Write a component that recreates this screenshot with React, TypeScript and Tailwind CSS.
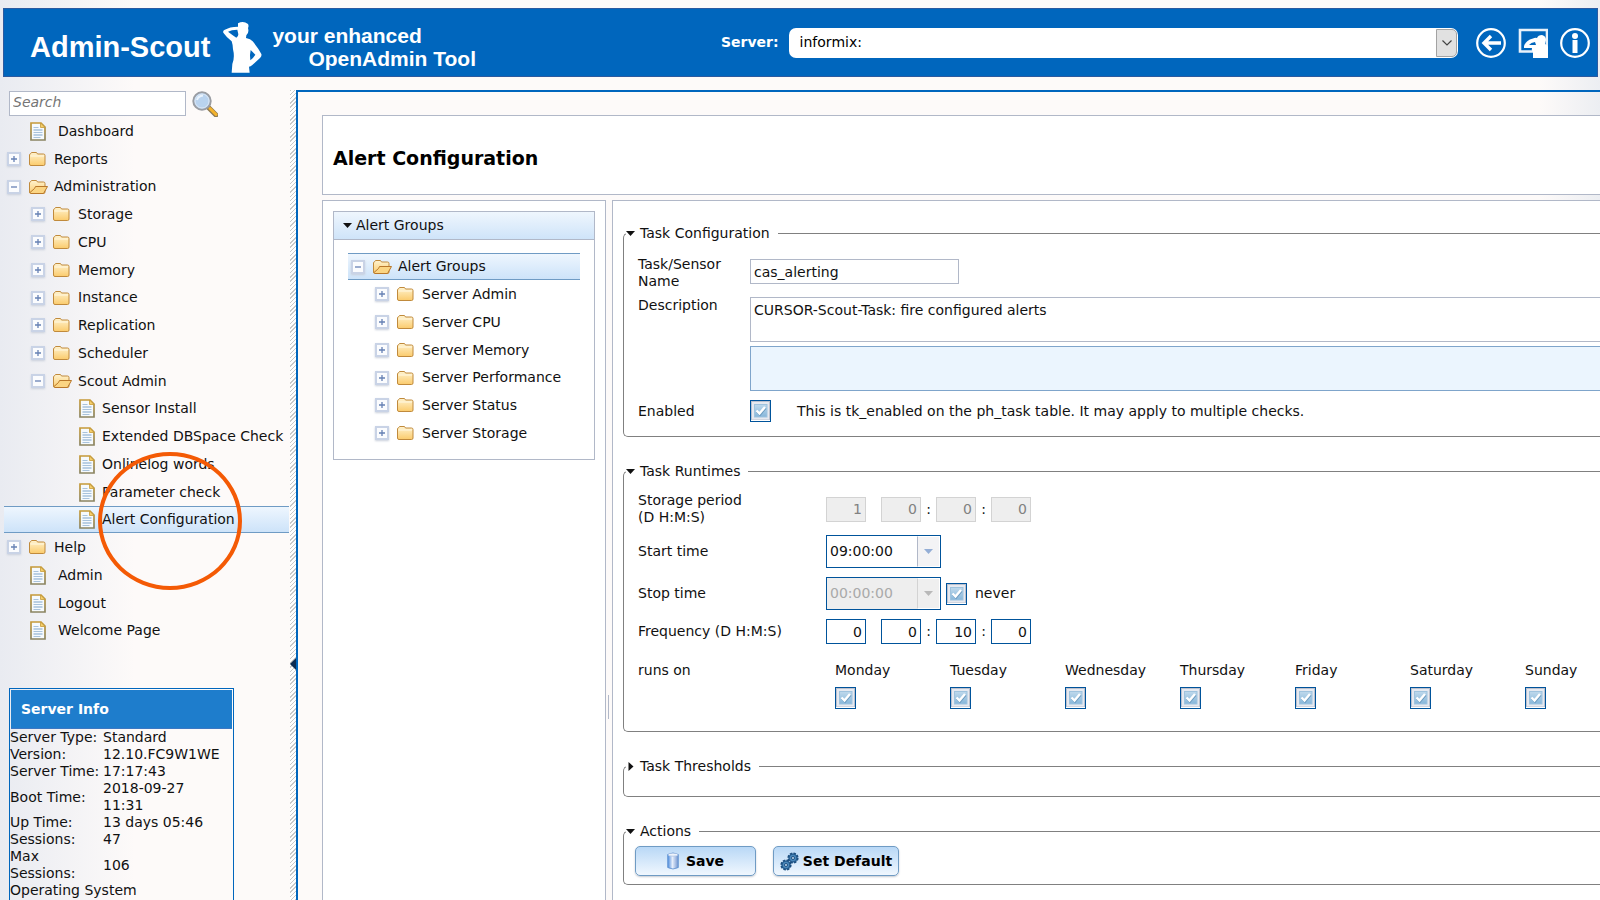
import { useState, type ReactNode } from "react";

type NodeKind = "leaf" | "folder" | "open";

interface TreeNode {
  label: string;
  kind: NodeKind;
  level: 0 | 1 | 2;
  selected?: boolean;
}

const MENU: TreeNode[] = [
  { label: "Dashboard", kind: "leaf", level: 0 },
  { label: "Reports", kind: "folder", level: 0 },
  { label: "Administration", kind: "open", level: 0 },
  { label: "Storage", kind: "folder", level: 1 },
  { label: "CPU", kind: "folder", level: 1 },
  { label: "Memory", kind: "folder", level: 1 },
  { label: "Instance", kind: "folder", level: 1 },
  { label: "Replication", kind: "folder", level: 1 },
  { label: "Scheduler", kind: "folder", level: 1 },
  { label: "Scout Admin", kind: "open", level: 1 },
  { label: "Sensor Install", kind: "leaf", level: 2 },
  { label: "Extended DBSpace Check", kind: "leaf", level: 2 },
  { label: "Onlinelog words", kind: "leaf", level: 2 },
  { label: "Parameter check", kind: "leaf", level: 2 },
  { label: "Alert Configuration", kind: "leaf", level: 2, selected: true },
  { label: "Help", kind: "folder", level: 0 },
  { label: "Admin", kind: "leaf", level: 0 },
  { label: "Logout", kind: "leaf", level: 0 },
  { label: "Welcome Page", kind: "leaf", level: 0 },
];

const ALERT_GROUPS: TreeNode[] = [
  { label: "Alert Groups", kind: "open", level: 0, selected: true },
  { label: "Server Admin", kind: "folder", level: 1 },
  { label: "Server CPU", kind: "folder", level: 1 },
  { label: "Server Memory", kind: "folder", level: 1 },
  { label: "Server Performance", kind: "folder", level: 1 },
  { label: "Server Status", kind: "folder", level: 1 },
  { label: "Server Storage", kind: "folder", level: 1 },
];

const SERVER_INFO = [
  ["Server Type:", "Standard"],
  ["Version:", "12.10.FC9W1WE"],
  ["Server Time:", "17:17:43"],
  ["Boot Time:", "2018-09-27 11:31"],
  ["Up Time:", "13 days 05:46"],
  ["Sessions:", "47"],
  ["Max Sessions:", "106"],
];

const DAYS = ["Monday", "Tuesday", "Wednesday", "Thursday", "Friday", "Saturday", "Sunday"];

function Defs() {
  return (
    <svg className="absolute h-0 w-0" aria-hidden="true">
      <defs>
        <linearGradient id="folder" x1="0" y1="0" x2="0" y2="1">
          <stop offset="0" stopColor="#fff3cf" />
          <stop offset="1" stopColor="#fbcb6c" />
        </linearGradient>
        <linearGradient id="page" x1="0" y1="0" x2="0" y2="1">
          <stop offset="0" stopColor="#c69a38" />
          <stop offset="1" stopColor="#8a8462" />
        </linearGradient>
        <linearGradient id="drum" x1="0" y1="0" x2="1" y2="0">
          <stop offset="0" stopColor="#4c8bdc" />
          <stop offset="0.45" stopColor="#e6eefb" />
          <stop offset="1" stopColor="#6f93cf" />
        </linearGradient>
        <linearGradient id="tick" x1="0" y1="0" x2="0" y2="1">
          <stop offset="0" stopColor="#bfd9ec" />
          <stop offset="1" stopColor="#86b6da" />
        </linearGradient>
      </defs>
    </svg>
  );
}

function PageIcon() {
  return (
    <svg className="h-[19px] w-4 shrink-0" viewBox="0 0 16 19">
      <path d="M1 1h10l4 4v13H1z" fill="#f6fafd" stroke="url(#page)" strokeWidth="1.700" />
      <path d="M10.500 1v4.500H15z" fill="#f6cf6a" stroke="#c69a38" strokeWidth=".8" />
      <path d="M3.500 5.500h5M3.500 10.500h9M3.500 15.500h7" stroke="#a9c3dc" />
      <path d="M3.500 8h9M3.500 13h9" stroke="#7fa5cb" />
    </svg>
  );
}

function FolderIcon({ open }: { open: boolean }) {
  return (
    <svg className="h-4 w-[19px] shrink-0" viewBox="0 0 19 16">
      <path
        d="M.5 4q0-1 1-1.200L2.500 1.500h5l1 1.500H14.500q1.500 0 1.500 1.500V13q0 1.500-1.500 1.500H2q-1.500 0-1.500-1.500z"
        fill="url(#folder)"
        stroke="#c08a3c"
      />
      {open ? (
        <path d="M1 13.500L5.500 9.500l1-2h12L14.500 14.500H2z" fill="#fbd583" stroke="#b9782b" />
      ) : (
        <path d="M1.500 5h13.500" stroke="#fff8e2" />
      )}
    </svg>
  );
}

function Expander({ open, label }: { open: boolean; label: string }) {
  return (
    <button
      aria-label={`${open ? "Collapse" : "Expand"} ${label}`}
      className="h-[14px] w-[14px] shrink-0 border-2 border-[#c9d3e6] bg-[#fbfcfe] shadow-[0_1px_2px_#c9cfdb]"
    >
      <svg viewBox="0 0 10 10" className="block h-[10px] w-[10px]">
        <path d={open ? "M2 5h6" : "M2 5h6M5 2v6"} stroke="#6681b4" strokeWidth="1.300" />
      </svg>
    </button>
  );
}

function TreeRow({ node }: { node: TreeNode }) {
  const leaf = node.kind === "leaf";
  const leafIndent = node.level === 0 ? "pl-[26px]" : "pl-[75px]";
  const folderIndent = node.level === 0 ? "pl-[3px]" : "pl-[27px]";
  const leafGap = node.level === 0 ? "gap-3" : "gap-[7px]";
  const look = node.selected
    ? "border-y border-[#6f9bc4] bg-linear-to-b from-[#eef6fe] to-[#cde3f9]"
    : "";

  return (
    <li className={`flex h-7 items-center ${leaf ? leafIndent : folderIndent} ${look}`}>
      {!leaf && <Expander open={node.kind === "open"} label={node.label} />}
      <a href="#" className={`flex items-center whitespace-nowrap ${leaf ? leafGap : "ml-2 gap-[6px]"}`}>
        {leaf ? <PageIcon /> : <FolderIcon open={node.kind === "open"} />}
        {node.label}
      </a>
    </li>
  );
}

function Triangle({ open = true }: { open?: boolean }) {
  return (
    <svg className="h-[9px] w-[9px] shrink-0" viewBox="0 0 9 9">
      <path d={open ? "M0 2h9L4.500 7z" : "M2.500 0v9l5-4.500z"} fill="#111" />
    </svg>
  );
}

function Tick({ id, label }: { id?: string; label?: string }) {
  const [on, setOn] = useState(true);
  return (
    <span className="relative block h-[22px] w-[21px] shrink-0">
      <input
        type="checkbox"
        id={id}
        aria-label={label}
        checked={on}
        onChange={() => setOn(!on)}
        className="block h-[22px] w-[21px] appearance-none border border-[#00539b] bg-[#dfe2ea]"
      />
      {on && (
        <svg className="pointer-events-none absolute inset-0 h-[22px] w-[21px]" viewBox="0 0 21 22">
          <rect x="1.500" y="1.500" width="18" height="18.500" fill="#e6e9f0" stroke="#bcc1ce" />
          <path d="M1 20.500h19" stroke="#fff" />
          <rect x="4.500" y="4.500" width="12.500" height="12.500" fill="url(#tick)" stroke="#9fc3de" />
          <path d="M7 11.500l3 3L15.500 8" fill="none" stroke="#6d9cc0" strokeWidth="2.400" />
          <path d="M6.500 10.500l3 3L15 7" fill="none" stroke="#fff" strokeWidth="2.400" />
        </svg>
      )}
    </span>
  );
}

function Section({ title, open = true, children }: { title: string; open?: boolean; children?: ReactNode }) {
  return (
    <fieldset className="rounded-l-[5px] border border-r-0 border-[#808080]">
      <legend className="ml-[2px] flex h-4 items-center gap-[5px] pr-2 leading-4">
        <Triangle open={open} />
        {title}
      </legend>
      {children}
    </fieldset>
  );
}

function Duration({ name, values, disabled = false }: { name: string; values: number[]; disabled?: boolean }) {
  const units = ["days", "hours", "minutes", "seconds"];
  return (
    <div className="flex items-center">
      {values.map((v, i) => (
        <div key={units[i]} className="flex items-center">
          {i > 0 && <span className="w-[15px] text-center">{i > 1 ? ":" : ""}</span>}
          <input
            aria-label={`${name} ${units[i]}`}
            defaultValue={v}
            disabled={disabled}
            className="h-[25px] w-10 border border-[#00539b] bg-white pr-[3px] text-right disabled:border-[#d3d3d3] disabled:bg-[#eee] disabled:text-[#818181]"
          />
        </div>
      ))}
    </div>
  );
}

function TimeBox({ id, value, disabled = false }: { id: string; value: string; disabled?: boolean }) {
  return (
    <div className={`flex h-[33px] w-[115px] border border-[#00539b] ${disabled ? "bg-[#eee]" : "bg-white"}`}>
      <input id={id} defaultValue={value} disabled={disabled} className="w-[90px] pl-[3px] disabled:text-[#a9a9a9]" />
      <button
        aria-label="Choose time"
        disabled={disabled}
        className="grid flex-1 place-items-center border border-l-[#b1b8c8] border-white bg-[#f3f3f5] disabled:border-l-[#d3d3d3] disabled:bg-[#efefef]"
      >
        <svg viewBox="0 0 9 5" className={`h-[5px] w-[9px] ${disabled ? "text-[#b9b9b9]" : "text-[#94aed6]"}`}>
          <path d="M0 0h9L4.500 5z" fill="currentColor" />
        </svg>
      </button>
    </div>
  );
}

function ScoutFigure() {
  return (
    <svg className="ml-1 h-[62px] w-[58px]" viewBox="0 0 174 186" fill="#fff">
      <path d="M72 22q16-9 30 2q3 6 0 12q4 14-5 22l-1 8q14 2 20 10q18 22 26 38q2 6-4 12l-24 22q-4 4-9 4l2 18H53l2-26q8-20 2-44q-1-16-4-24Q38 64 28 50q-2-5 3-8q16-10 41-10z" />
      <path d="M42 47q10-6 28-6l3 14q0 8-6 10q-12-8-25-18zM110 102q8 8 14 14q-6 10-15 17q-3-14 1-31z" fill="#0066bd" />
    </svg>
  );
}

function Header() {
  return (
    <header className="ml-[3px] mr-[2px] mt-2 flex h-[69px] items-center border border-[#2b5aa0] bg-[#0066bd] pr-[7px] text-white">
      <div className="flex w-[717px] shrink-0 items-center pt-2 font-['Liberation_Sans',Arial,sans-serif] font-bold">
        <span className="pl-[26px] text-[29px] leading-[60px]">Admin-Scout</span>
        <ScoutFigure />
        <p className="text-[21px] leading-[23px]">
          your enhanced
          <br />
          <span className="pl-9">OpenAdmin Tool</span>
        </p>
      </div>
      <label htmlFor="server" className="font-bold">
        Server:
      </label>
      <div className="relative ml-[10px] flex-1">
        <select
          id="server"
          className="block h-[30px] w-full appearance-none rounded-[7px] bg-white pl-[11px] text-black"
        >
          <option>informix:</option>
        </select>
        <span className="pointer-events-none absolute inset-y-px right-px grid w-[21px] place-items-center rounded-r-[5px] border border-[#a3a3a3] bg-[#e1e1e1]">
          <svg viewBox="0 0 10 6" className="h-[6px] w-[10px]">
            <path d="M.5.500L5 5L9.500.500" fill="none" stroke="#444" strokeWidth="1.200" />
          </svg>
        </span>
      </div>
      <nav className="ml-[18px] flex items-center gap-3">
        <a href="#" aria-label="Back">
          <svg viewBox="0 0 30 30" className="h-[30px] w-[30px]" fill="none" stroke="#fff">
            <circle cx="15" cy="15" r="13.800" strokeWidth="2.200" />
            <path d="M25 15H8M15 8l-7 7 7 7" strokeWidth="3.400" />
          </svg>
        </a>
        <a href="#" aria-label="Presentation">
          <svg viewBox="0 0 30 30" className="h-[30px] w-[30px]">
            <path d="M16 23.500H2V2h27v20" fill="none" stroke="#e8f1fa" strokeWidth="2.600" />
            <path d="M6 18q2-6 9-7.500q2-1 4-.5q1-3 5-3q4 1 4 5l-1 4q3 1 3 3v11H15v-6q-2-2-1-4H6z" fill="#fff" />
            <path d="M11 17q2-2.500 6-3l1 3z" fill="#0066bd" />
          </svg>
        </a>
        <a href="#" aria-label="Info">
          <svg viewBox="0 0 30 30" className="h-[30px] w-[30px]">
            <circle cx="15" cy="15" r="13.800" fill="none" stroke="#fff" strokeWidth="2.200" />
            <circle cx="15" cy="8" r="3" fill="#fff" />
            <path d="M12.500 12h5v13h-5z" fill="#fff" />
          </svg>
        </a>
      </nav>
    </header>
  );
}

function ServerInfo() {
  return (
    <section className="ml-[9px] mt-11 w-[225px] border border-[#0066bd] pb-10">
      <h2 className="m-px mb-0 border-b border-[#3c78c3] bg-[#1e7dcc] pl-[10px] font-bold leading-[38px] text-white">
        Server Info
      </h2>
      <table className="w-full table-fixed text-left leading-[17px]">
        <colgroup>
          <col className="w-[93px]" />
          <col />
        </colgroup>
        <tbody>
          {SERVER_INFO.map(([k, v]) => (
            <tr key={k}>
              <th scope="row" className="font-normal">{k}</th>
              <td className="pr-3">{v}</td>
            </tr>
          ))}
          <tr>
            <th scope="row" colSpan={2} className="font-normal">Operating System</th>
          </tr>
        </tbody>
      </table>
    </section>
  );
}

function Sidebar() {
  return (
    <aside className="w-[290px] shrink-0 pt-px">
      <form className="flex h-[26px] items-start gap-[6px] pl-[9px]">
        <input
          type="search"
          aria-label="Search"
          placeholder="Search"
          className="h-[25px] w-[177px] border border-[#b1b8c8] bg-white pb-[3px] pl-[3px] italic placeholder:text-[#757575]"
        />
        <button type="button" aria-label="Start search">
          <svg viewBox="0 0 26 26" className="block h-[26px] w-[26px]">
            <path d="M16.500 16.500L24 24" stroke="#8f7b55" strokeWidth="5" strokeLinecap="round" />
            <path d="M18 17.500l6 6" stroke="#f4b32c" strokeWidth="3" strokeLinecap="round" />
            <circle cx="10" cy="10" r="8.700" fill="#b9d3ef" stroke="#9a9da3" strokeWidth="2" />
            <circle cx="10" cy="10" r="7" fill="none" stroke="#dbe7f5" />
            <path d="M5 9q1-4 6-4.500" fill="none" stroke="#e9f3fd" strokeWidth="2" />
          </svg>
        </button>
      </form>
      <div className="relative ml-1 mr-px">
        <ul className="[&>li:nth-child(4n+3)]:h-[27px]">
          {MENU.map((node) => <TreeRow key={node.label} node={node} />)}
        </ul>
        {/* highlight ring around the active entry */}
        <span className="pointer-events-none absolute bottom-[54px] left-[94px] h-[138px] w-[144px] rounded-[50%] border-4 border-[#f45a05]" />
      </div>
      <ServerInfo />
    </aside>
  );
}

function TaskConfiguration() {
  return (
    <Section title="Task Configuration">
      <div className="grid grid-cols-[112px_1fr] gap-y-[7px] pb-[14px] pl-[14px] pt-[15px] leading-[17px]">
        <label htmlFor="task-name">
          Task/Sensor
          <br />
          Name
        </label>
        <div className="pt-[3px]">
          <input
            id="task-name"
            defaultValue="cas_alerting"
            className="block h-[25px] w-[209px] border border-[#b1b8c8] pl-[3px]"
          />
        </div>
        <label htmlFor="description">Description</label>
        <div className="flex flex-col gap-1 pb-[2px]">
          <textarea
            id="description"
            defaultValue="CURSOR-Scout-Task: fire configured alerts"
            className="block h-[45px] w-full resize-none border border-r-0 border-[#b1b8c8] pl-[3px] pt-1"
          />
          <textarea
            aria-label="Localized description"
            className="block h-[45px] w-full resize-none border border-r-0 border-[#7fa5cb] bg-[#ebf5fe]"
          />
        </div>
        <label htmlFor="enabled" className="self-center">Enabled</label>
        <div className="flex items-center gap-[26px]">
          <Tick id="enabled" />
          This is tk_enabled on the ph_task table. It may apply to multiple checks.
        </div>
      </div>
    </Section>
  );
}

function TaskRuntimes() {
  return (
    <Section title="Task Runtimes">
      <div className="grid grid-cols-[188px_1fr] items-center gap-y-[9px] pb-[22px] pl-[14px] pt-[13px] leading-[17px]">
        <span>
          Storage period
          <br />
          (D H:M:S)
        </span>
        <Duration name="Storage period" values={[1, 0, 0, 0]} disabled />
        <label htmlFor="start-time">Start time</label>
        <TimeBox id="start-time" value="09:00:00" />
        <label htmlFor="stop-time">Stop time</label>
        <div className="flex items-center">
          <TimeBox id="stop-time" value="00:00:00" disabled />
          <span className="ml-[5px] flex items-center gap-2">
            <Tick id="never" />
            <label htmlFor="never">never</label>
          </span>
        </div>
        <span>Frequency (D H:M:S)</span>
        <Duration name="Frequency" values={[0, 0, 10, 0]} />
        <span className="self-start pt-[9px]">runs on</span>
        <div className="flex pl-[9px] pt-[9px]">
          {DAYS.map((day) => (
            <label key={day} className="flex w-[115px] shrink-0 flex-col gap-2">
              {day}
              <Tick label={day} />
            </label>
          ))}
        </div>
      </div>
    </Section>
  );
}

function Gear({ cx, cy }: { cx: number; cy: number }) {
  return (
    <g>
      <circle cx={cx} cy={cy} r="4.600" fill="#3f7fb5" stroke="#1d4f80" strokeWidth="2" strokeDasharray="2.400 1.200" />
      <circle cx={cx} cy={cy} r="3.900" fill="#4a88bb" stroke="#1d4f80" strokeWidth=".8" />
      <circle cx={cx} cy={cy} r="1.500" fill="#cfe3f5" stroke="#1d4f80" />
    </g>
  );
}

function Actions() {
  const button =
    "flex h-[30px] items-center justify-center rounded-[5px] border border-[#6f9bc4] bg-linear-to-b from-[#b9d8f6] to-[#f0f7fe] font-bold text-black shadow-[0_1px_2px_#c5c9d0]";
  return (
    <Section title="Actions">
      <div className="flex gap-[17px] pb-2 pl-[11px] pt-[7px]">
        <button className={`${button} w-[121px] gap-[7px]`}>
          <svg viewBox="0 0 12 18" className="h-[18px] w-3">
            <path d="M.7 2.500Q6-.5 11.300 2.500v13Q6 18.500.7 15.500z" fill="url(#drum)" stroke="#5b8fd0" strokeWidth=".8" />
            <ellipse cx="6" cy="2.700" rx="4.800" ry="1.500" fill="#eef3fb" stroke="#9bb5dc" strokeWidth=".6" />
          </svg>
          Save
        </button>
        <button className={`${button} w-[126px] gap-1`}>
          <svg viewBox="0 0 19 19" className="h-[19px] w-[19px]">
            <Gear cx={13} cy={6} />
            <Gear cx={6} cy={13} />
          </svg>
          Set Default
        </button>
      </div>
    </Section>
  );
}

function Main() {
  return (
    <main className="flex min-w-0 flex-1 flex-col border-l-2 border-t-2 border-[#0066bd] pl-6 pt-[23px]">
      <div className="flex h-20 shrink-0 items-center border border-r-0 border-[#b1b8c8] bg-white pl-[10px] pt-[6px]">
        <h1 className="text-[19px] font-bold text-black">Alert Configuration</h1>
      </div>
      <div className="mt-[5px] flex min-h-0 flex-1">
        <section className="w-[284px] shrink-0 border border-b-0 border-[#b1b8c8] bg-white p-[10px]">
          <div className="border border-[#b1b8c8]">
            <h2 className="flex h-7 items-center gap-1 border-b border-[#b1b8c8] bg-linear-to-b from-[#eff6fd] to-[#cfe4f9] pl-[9px]">
              <Triangle />
              Alert Groups
            </h2>
            <ul className="px-[14px] pb-3 pt-[13px] [&>li:nth-child(4n+1)]:h-[27px]">
              {ALERT_GROUPS.map((node) => <TreeRow key={node.label} node={node} />)}
            </ul>
          </div>
        </section>
        <div className="flex w-[6px] shrink-0 items-center pl-[2px] pt-[314px]">
          <span className="h-6 w-px bg-[#b1b8c8]" />
        </div>
        <div className="flex min-w-0 flex-1 flex-col gap-[26px] overflow-hidden border border-b-0 border-r-0 border-[#b1b8c8] bg-white pl-[10px] pt-6">
          <TaskConfiguration />
          <TaskRuntimes />
          <Section title="Task Thresholds" open={false}>
            <div className="h-[22px]" />
          </Section>
          <Actions />
        </div>
      </div>
    </main>
  );
}

export default function App() {
  return (
    <div className="flex h-screen flex-col overflow-hidden bg-[linear-gradient(to_right,#e9ebf1_0px,#fdfaf9_135px,#fdfaf9_calc(100%_-_60px),#eceef2_100%)] font-['DejaVu_Sans',Verdana,sans-serif] text-[14px] text-[#111]">
      <Defs />
      <Header />
      <div className="mt-[13px] flex min-h-0 flex-1">
        <Sidebar />
        <div className="flex w-[6px] shrink-0 items-center bg-[repeating-linear-gradient(135deg,#c9c9c9_0px,#c9c9c9_1px,#fff_1px,#fff_3px)] pt-[338px]">
          <svg viewBox="0 0 6 12" className="h-3 w-[6px]">
            <path d="M6 0v12L0 6z" fill="#0d2c52" />
          </svg>
        </div>
        <Main />
      </div>
    </div>
  );
}
